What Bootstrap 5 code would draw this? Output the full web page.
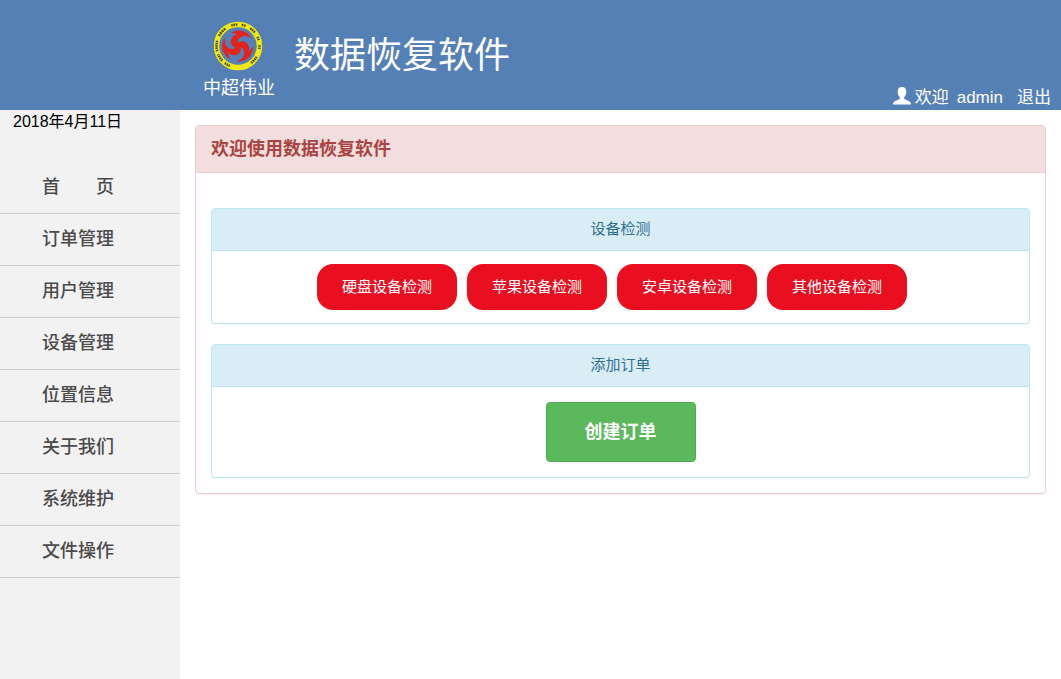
<!DOCTYPE html>
<html lang="zh-CN">
<head>
<meta charset="utf-8">
<meta name="viewport" content="width=device-width, initial-scale=1">
<title>数据恢复软件</title>
<link href="https://cdn.jsdelivr.net/npm/bootstrap@5.3.0/dist/css/bootstrap.min.css" rel="stylesheet">
<style>
  body { font-family: "Liberation Sans", "Noto Sans CJK SC", sans-serif; font-size: 15px; line-height: 20px; color: #000; }
  .topbar { background: #5580b6; min-height: 110px; padding-right: 10px; }
  .brand { padding: 21px 0 0 203px; gap: 19px; }
  .brand-name { font-size: 18px; line-height: 24px; padding-top: 5px; }
  .app-title { font-size: 36px; line-height: 48px; padding-top: 11px; }
  .account { font-size: 17px; line-height: 24px; }
  .account a { color: #fff; text-decoration: none; }
  .account .logout { margin-left: 14px; }
  .side { width: 180px; background: #f2f2f2; }
  .today { font-size: 16px; line-height: 24px; padding-left: 13px; margin-bottom: 28px; }
  .side .nav-link { color: #4b4b4b; font-size: 18px; font-weight: 500; line-height: 24px; padding: 13px 0 14px 42px; border-bottom: 1px solid #ccc; }
  .content { padding: 15px; }
  .panel { border-radius: 4px; box-shadow: 0 1px 1px rgba(0,0,0,.05); }
  .panel .card-header { border-radius: 3px 3px 0 0; }
  .panel-danger { border-color: #ebccd1; }
  .panel-danger > .card-header { background: #f2dede; border-color: #ebccd1; color: #a94442; font-size: 18px; line-height: 26px; padding: 10px 15px; }
  .panel-info { border-color: #bce8f1; }
  .panel-info > .card-header { background: #d9edf7; border-color: #bce8f1; color: #31708f; padding: 10px 15px 11px; }
  .outer-body { padding: 35px 15px 15px; gap: 20px; }
  .detect-body { padding: 13px 17px 13px 0; gap: 10px; }
  .detect { width: 140px; height: 46px; border: 0; border-radius: 16px; background: #e90f20; color: #fff; font-size: 15px; padding: 0; }
  .detect:hover { background: #cc0c1b; color: #fff; }
  .order-body { padding: 15px; }
  .create { width: 150px; height: 60px; border: 1px solid #4cae4c; border-radius: 4px; background: #5cb85c; color: #fff; font-size: 18px; }
  .create:hover { background: #449d44; color: #fff; }
</style>
</head>
<body class="d-flex flex-column min-vh-100">
<header class="topbar d-flex flex-wrap justify-content-between text-white">
  <div class="brand d-flex">
    <div class="text-center">
      <svg class="d-block mx-auto" width="50" height="50" viewBox="-24 -25 50 50" aria-hidden="true">
        <defs>
          <path id="blade" d="M-7-13C-2-17 9-17 14-7C9-11 3-11 0-6C-1-4 0-2 2-1L0 2C-5 2-8-2-7-6C-6-9-4-11-1-12C-3-13-5-13-7-13Z"/>
        </defs>
        <circle r="21.500" fill="none" stroke="#eeea0b" stroke-width="5.500"/>
        <circle r="21.500" fill="none" stroke="#45430a" stroke-width="2.400" pathLength="360" transform="rotate(30)" stroke-dasharray="4 2 4 2 4 2 4 60 4 2 4 2 4 9 4 2 4 2 4 2 3 8 4 2 4 2 4 2 4 2 4 14 5 2 5 2 5 2 5 18 4 2 4 2 4 12 4 2 4 15 4 2 4 2 4 14 4 2 3 14 4 2 4 22"/>
        <g fill="#e3231c">
          <use href="#blade"/>
          <use href="#blade" transform="rotate(120)"/>
          <use href="#blade" transform="rotate(240)"/>
        </g>
      </svg>
      <div class="brand-name">中超伟业</div>
    </div>
    <h1 class="app-title fw-normal m-0">数据恢复软件</h1>
  </div>
  <div class="account d-flex align-self-end align-items-center">
    <svg class="me-1 mb-1" width="18" height="18" viewBox="0 0 18 18" fill="#fff" aria-hidden="true"><path d="M9 0C6.200 0 4.600 2 4.700 4.800C4.800 7.200 5.600 9 6.800 10.200V11.800C6 13 1.500 14 .7 15.200C.2 16 0 17 0 17.500H18C18 17 17.800 16 17.300 15.200C16.500 14 12 13 11.200 11.800V10.200C12.400 9 13.200 7.200 13.300 4.800C13.400 2 11.800 0 9 0Z"/></svg>
    <span class="me-2">欢迎</span>
    <a href="#">admin</a>
    <a href="#" class="logout">退出</a>
  </div>
</header>
<div class="d-flex flex-grow-1">
  <aside class="side flex-shrink-0">
    <div class="today">2018年4月11日</div>
    <nav class="nav flex-column">
      <a class="nav-link" href="#">首　　页</a>
      <a class="nav-link" href="#">订单管理</a>
      <a class="nav-link" href="#">用户管理</a>
      <a class="nav-link" href="#">设备管理</a>
      <a class="nav-link" href="#">位置信息</a>
      <a class="nav-link" href="#">关于我们</a>
      <a class="nav-link" href="#">系统维护</a>
      <a class="nav-link" href="#">文件操作</a>
    </nav>
  </aside>
  <main class="content flex-grow-1">
    <section class="card panel panel-danger">
      <h2 class="card-header fw-bold m-0">欢迎使用数据恢复软件</h2>
      <div class="outer-body d-flex flex-column">
        <section class="card panel panel-info">
          <div class="card-header text-center">设备检测</div>
          <div class="detect-body d-flex flex-wrap justify-content-center">
            <button type="button" class="btn detect">硬盘设备检测</button>
            <button type="button" class="btn detect">苹果设备检测</button>
            <button type="button" class="btn detect">安卓设备检测</button>
            <button type="button" class="btn detect">其他设备检测</button>
          </div>
        </section>
        <section class="card panel panel-info">
          <div class="card-header text-center">添加订单</div>
          <div class="order-body text-center">
            <button type="button" class="btn create fw-bold">创建订单</button>
          </div>
        </section>
      </div>
    </section>
  </main>
</div>
<script src="https://cdn.jsdelivr.net/npm/bootstrap@5.3.0/dist/js/bootstrap.bundle.min.js"></script>
</body>
</html>
